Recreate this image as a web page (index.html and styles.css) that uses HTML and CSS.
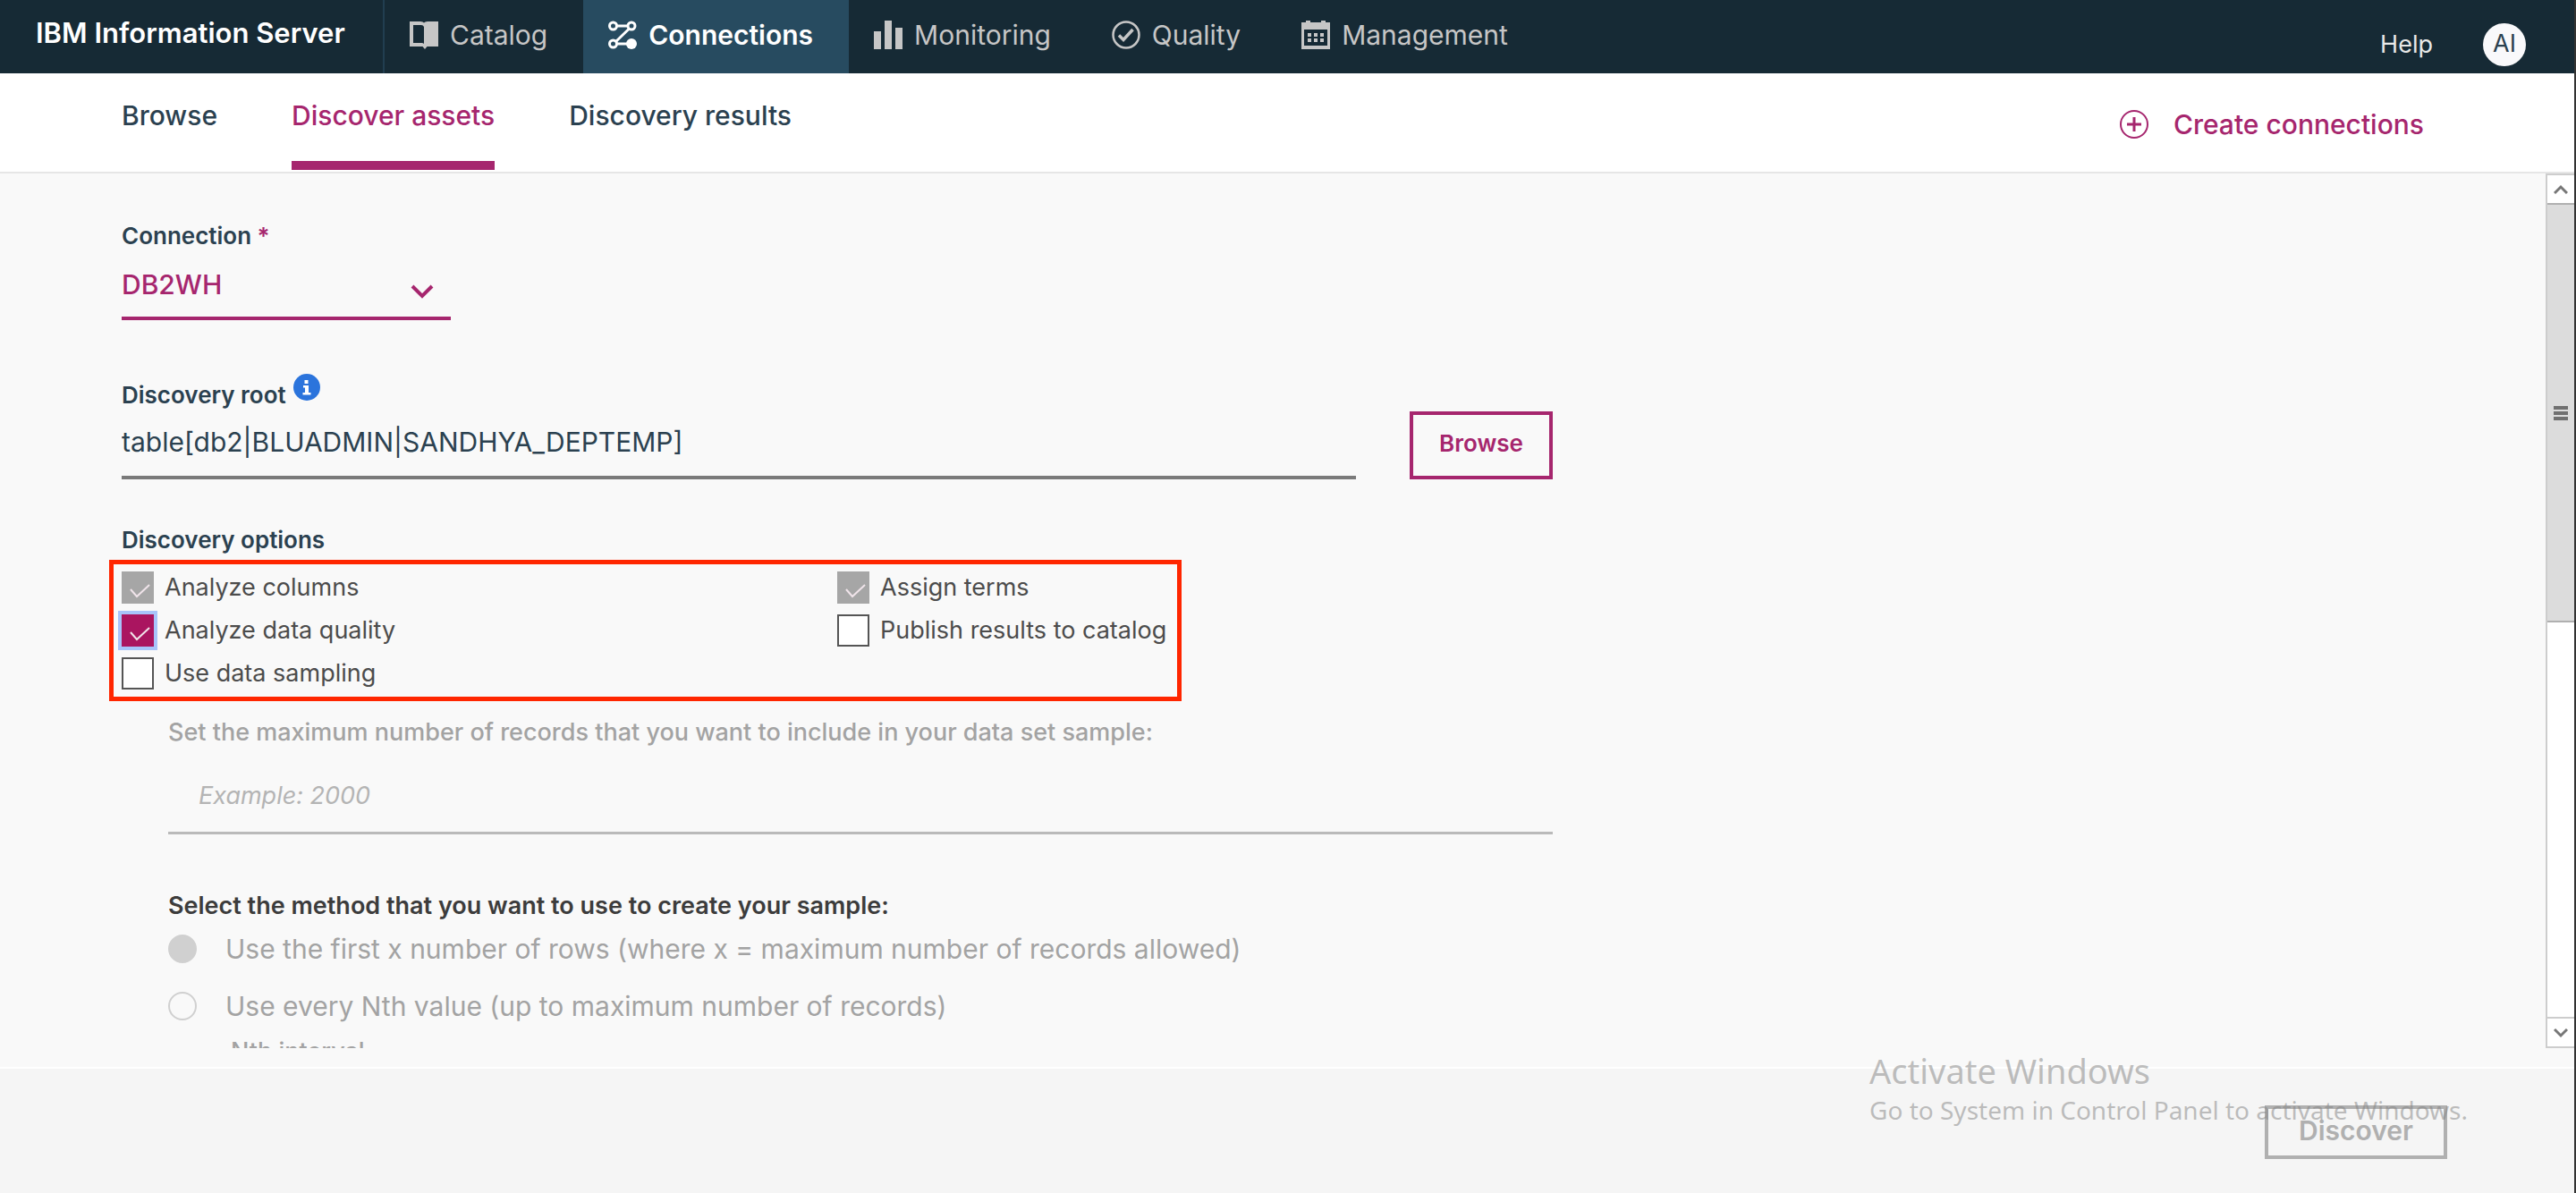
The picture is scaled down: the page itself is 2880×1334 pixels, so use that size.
FILE: index.html
```html
<!DOCTYPE html>
<html lang="en">
<head>
<meta charset="utf-8">
<meta name="viewport" content="width=device-width, initial-scale=1">
<title>IBM Information Server – Discover assets</title>
<link rel="stylesheet" href="styles.css">
</head>
<body>
<header class="topbar">
  <div class="brand">IBM Information Server</div>
  <nav class="mainnav" aria-label="Main">
    <a class="navitem" href="#catalog">
      <svg class="icon" viewBox="0 0 32 32" aria-hidden="true"><path fill="currentColor" fill-rule="evenodd" d="M0 1h12q3 0 4 1.500Q17 1 20 1h12v28H19.500L17 32l-2.500-3H0zM4 5v20h9.500q1.500 0 2.500 1V7q-1-2-3-2z"/></svg>
      Catalog</a>
    <a class="navitem navitem-active" href="#connections" aria-current="page">
      <svg class="icon" viewBox="0 0 32 32" aria-hidden="true"><g fill="none" stroke="currentColor" stroke-width="3"><circle cx="5.500" cy="6" r="4"/><circle cx="26" cy="6" r="4"/><circle cx="5.500" cy="26" r="4"/><path d="M9.500 6H22M23.500 9 8.500 23.500M9.500 26H22"/></g><circle cx="26" cy="26" r="6" fill="currentColor"/></svg>
      Connections</a>
    <a class="navitem" href="#monitoring">
      <svg class="icon" viewBox="0 0 32 32" aria-hidden="true"><path fill="currentColor" d="M0 12h8v20H0zM12 0h8v32h-8zM24 8h8v24h-8z"/></svg>
      Monitoring</a>
    <a class="navitem" href="#quality">
      <svg class="icon" viewBox="0 0 32 32" aria-hidden="true"><g fill="none" stroke="currentColor"><circle cx="16" cy="16" r="14.500" stroke-width="2.500"/><path stroke-width="3.500" d="m8 16.500 5 5L23.500 10"/></g></svg>
      Quality</a>
    <a class="navitem" href="#management">
      <svg class="icon" viewBox="0 0 32 32" aria-hidden="true"><path fill="currentColor" fill-rule="evenodd" d="M0 2h5V0h5v2h12V0h5v2h5v30H0zM3 10v18h26V10z"/><path fill="currentColor" d="M7 14h4v4H7zM14 14h4v4h-4zM21 14h4v4h-4zM7 20h4v4H7zM14 20h4v4h-4zM21 20h4v4h-4z"/></svg>
      Management</a>
  </nav>
  <div class="account">
    <a class="help" href="#help">Help</a>
    <button class="avatar" type="button" aria-label="Account AI">AI</button>
  </div>
</header>

<div class="subbar">
  <nav class="tabs" aria-label="Connections">
    <a class="tab" href="#browse">Browse</a>
    <a class="tab tab-active" href="#discover" aria-current="page">Discover assets</a>
    <a class="tab" href="#results">Discovery results</a>
  </nav>
  <button class="create" type="button">
    <svg class="icon" viewBox="0 0 32 32" aria-hidden="true"><g fill="none" stroke="currentColor"><circle cx="16" cy="16" r="15" stroke-width="2"/><path stroke-width="3" d="M16 8v16M8 16h16"/></g></svg>
    Create connections</button>
</div>

<div class="workspace">
  <main class="scroller">
    <form class="form">
      <div class="field">
        <label class="label" for="connection">Connection <span class="required">*</span></label>
        <div class="select-wrap">
          <select class="select" id="connection"><option>DB2WH</option></select>
          <svg class="chevron" viewBox="0 0 26 16" aria-hidden="true"><path fill="none" stroke="currentColor" stroke-width="4" d="m2 2 11 11L24 2"/></svg>
        </div>
      </div>

      <div class="root-row">
        <div class="field root-field">
          <div class="label-row">
            <label class="label" for="root">Discovery root</label>
            <svg class="info" viewBox="0 0 30 30" aria-hidden="true"><circle cx="15" cy="15" r="15" fill="#2b74dc"/><path fill="#fff" d="M12.500 7h4v4h-4zM11 13h6v8h2.500v2.500h-9V21H13v-5.500h-2z"/></svg>
          </div>
          <input class="input" id="root" type="text" value="table[db2|BLUADMIN|SANDHYA_DEPTEMP]">
        </div>
        <button class="button" type="button">Browse</button>
      </div>

      <fieldset class="options">
        <legend class="label">Discovery options</legend>
        <div class="option-grid">
          <label class="option"><input class="check" type="checkbox" checked disabled>Analyze columns</label>
          <label class="option"><input class="check" type="checkbox" checked disabled>Assign terms</label>
          <label class="option"><input class="check check-focus" type="checkbox" checked>Analyze data quality</label>
          <label class="option"><input class="check" type="checkbox">Publish results to catalog</label>
          <label class="option"><input class="check" type="checkbox">Use data sampling</label>
        </div>
      </fieldset>

      <div class="sampling">
        <label class="hint" for="records">Set the maximum number of records that you want to include in your data set sample:</label>
        <input class="records" id="records" type="text" placeholder="Example: 2000" disabled>
        <fieldset class="methods">
          <legend class="method-title">Select the method that you want to use to create your sample:</legend>
          <label class="method"><input class="radio" type="radio" name="method" checked disabled>Use the first x number of rows (where x = maximum number of records allowed)</label>
          <label class="method"><input class="radio" type="radio" name="method" disabled>Use every Nth value (up to maximum number of records)</label>
          <div class="interval">Nth interval</div>
        </fieldset>
      </div>
    </form>
  </main>
  <div class="scrollbar" aria-hidden="true">
    <div class="scroll-end"><svg class="arrow" viewBox="0 0 16 12"><path fill="none" stroke="currentColor" stroke-width="3" d="m1 10 7-7 7 7"/></svg></div>
    <div class="track"><div class="thumb"><span class="grip"></span></div></div>
    <div class="scroll-end"><svg class="arrow" viewBox="0 0 16 12"><path fill="none" stroke="currentColor" stroke-width="3" d="m1 2 7 7 7-7"/></svg></div>
  </div>
</div>

<footer class="footer">
  <button class="button button-disabled" type="button" disabled>Discover</button>
  <div class="watermark">
    <p class="watermark-title">Activate Windows</p>
    <p class="watermark-text">Go to System in Control Panel to activate Windows.</p>
  </div>
</footer>
</body>
</html>
```
FILE: styles.css
```css
:root {
  --navy: #162a35;
  --navy-active: #274b60;
  --magenta: #a6266e;
  --ink: #2b4150;
  --body-text: #4c4c4c;
  --muted: #a3a3a3;
  --page: #f9f9f9;
}

* { box-sizing: border-box; }

body {
  display: flex;
  flex-direction: column;
  height: 100vh;
  margin: 0;
  border-right: 2px solid #333;
  background: var(--page);
  color: var(--ink);
  font: 400 30px/36px Inter, "Liberation Sans", sans-serif;
}

a { color: inherit; text-decoration: none; }
button, input, select { margin: 0; font: inherit; color: inherit; }
button { background: none; border: 0; padding: 0; }
fieldset { margin: 0; padding: 0; border: 0; min-width: 0; }
legend { padding: 0; }
.icon { flex: none; width: 32px; height: 32px; }

/* Top bar */
.topbar {
  display: flex;
  flex: none;
  height: 82px;
  background: var(--navy);
  color: #c6c6c6;
}
.brand {
  display: flex;
  align-items: center;
  width: 430px;
  padding: 0 0 8px 40px;
  border-right: 2px solid #213e50;
  color: #fff;
  font-size: 31px;
  font-weight: 600;
  white-space: nowrap;
}
.mainnav { display: flex; }
.navitem {
  display: flex;
  align-items: center;
  gap: 13px;
  padding: 0 40px 4px 28px;
}
.navitem-active {
  background: var(--navy-active);
  color: #fff;
  font-weight: 600;
}
.account {
  display: flex;
  align-items: center;
  gap: 56px;
  margin-left: auto;
  padding: 18px 54px 0 0;
  color: #e8e8e8;
  font-size: 27px;
}
.avatar {
  width: 48px;
  height: 48px;
  padding-bottom: 3px;
  border-radius: 50%;
  background: #f9f9fb;
  color: var(--ink);
}

/* Tabs */
.subbar {
  display: flex;
  flex: none;
  justify-content: space-between;
  height: 112px;
  padding: 0 168px 0 136px;
  border-bottom: 2px solid #e6e6e6;
  background: #fff;
  font-weight: 500;
}
.tabs { display: flex; gap: 83px; }
.tab {
  height: 108px;
  border-bottom: 10px solid transparent;
  line-height: 94px;
}
.tab-active { border-color: var(--magenta); color: var(--magenta); }
.create {
  display: flex;
  align-items: center;
  gap: 28px;
  padding-top: 4px;
  color: var(--magenta);
}

/* Scrolling form */
.workspace { display: flex; flex: 1; min-height: 0; margin-bottom: 21px; }
.scroller { flex: 1; min-width: 0; overflow: hidden; padding: 52px 136px 0; }
.form { max-width: 1600px; }
.field { display: flex; flex-direction: column; gap: 16px; }
.label { font-size: 26px; font-weight: 600; }
.required { color: var(--magenta); }

.select-wrap { position: relative; width: 368px; }
.select {
  appearance: none;
  display: block;
  width: 100%;
  height: 60px;
  padding: 0 0 16px;
  border: 0;
  border-bottom: 4px solid var(--magenta);
  border-radius: 0;
  background: transparent;
  color: var(--magenta);
  font-weight: 500;
}
.chevron {
  position: absolute;
  top: 20px;
  right: 19px;
  width: 26px;
  height: 16px;
  color: var(--magenta);
  pointer-events: none;
}

.root-row { display: flex; align-items: flex-end; gap: 60px; margin-top: 66px; }
.root-field { flex: 1; }
.label-row { display: flex; gap: 8px; height: 36px; }
.info { width: 30px; height: 30px; margin-top: -6px; }
.input {
  width: 100%;
  height: 60px;
  padding: 0 0 20px;
  border: 0;
  border-bottom: 4px solid #7a7a7a;
  background: transparent;
}
.button {
  width: 160px;
  height: 76px;
  padding-bottom: 4px;
  border: 4px solid var(--magenta);
  color: var(--magenta);
  font-size: 26px;
  font-weight: 600;
}

.options { margin-top: 50px; }
.option-grid {
  display: grid;
  grid-template-columns: 800px 1fr;
  gap: 12px 0;
  max-width: 1199px;
  margin: 4px 0 0 -14px;
  padding: 8px 9px;
  border: 5px solid #ff2600;
}
.option {
  display: flex;
  align-items: center;
  gap: 12px;
  color: var(--body-text);
  font-size: 27px;
}
.check {
  appearance: none;
  flex: none;
  width: 36px;
  height: 36px;
  border: 2px solid #555;
  background: #fff;
}
.check:checked {
  border-color: #aa1560;
  background: #aa1560 url("data:image/svg+xml,%3Csvg xmlns='http://www.w3.org/2000/svg' viewBox='0 0 32 32'%3E%3Cpath d='m8 18 7 8L29 13' fill='none' stroke='%23f0e4ea' stroke-width='2'/%3E%3C/svg%3E") center / 32px 32px no-repeat;
}
.check:checked:disabled { border-color: #a6a6a6; background-color: #a6a6a6; }
.check-focus { box-shadow: 0 0 0 4px #a8c4fa; }

/* Sampling settings */
.sampling { margin: 17px 0 0 52px; color: var(--muted); }
.hint, .method-title { display: block; font-size: 27px; }
.hint { font-weight: 500; }
.records {
  display: block;
  width: 100%;
  height: 84px;
  margin-top: 12px;
  padding: 0 34px;
  border: 0;
  border-bottom: 3px solid #bababa;
  background: transparent;
  font-size: 27px;
  font-style: italic;
}
.records::placeholder { color: #b4b4b4; }
.methods { margin-top: 62px; }
.method-title { color: #3c3c3c; font-weight: 600; }
.method { display: flex; align-items: center; gap: 32px; margin: 12px 0 28px; }
.method + .method { margin: 0 0 15px; }
.radio {
  appearance: none;
  flex: none;
  width: 32px;
  height: 32px;
  border: 2px solid #d0d0d0;
  border-radius: 50%;
}
.radio:checked { background: #d0d0d0; }
.interval { padding-left: 70px; font-size: 27px; font-weight: 500; }

/* Scrollbar */
.scrollbar {
  display: flex;
  flex: none;
  flex-direction: column;
  width: 32px;
  border: 2px solid #cdcdcd;
  border-right: 0;
  background: #fff;
  color: #777;
}
.scroll-end { display: grid; flex: none; height: 31px; place-items: center; }
.arrow { width: 16px; height: 12px; }
.track { flex: 1; border-bottom: 2px solid #cdcdcd; }
.thumb {
  display: grid;
  height: 515px;
  height: calc(52% - 4px);
  place-items: center;
  border: 2px solid #b0b0b0;
  border-width: 2px 0;
  background: #dcdcdc;
}
.grip {
  width: 16px;
  height: 16px;
  background: repeating-linear-gradient(#707070 0 4px, #dcdcdc 4px 6px);
}

/* Footer */
.footer {
  position: relative;
  display: flex;
  flex: none;
  justify-content: flex-end;
  padding: 41px 142px 38px;
  border-top: 2px solid #fff;
  background: #f5f5f5;
}
.button-disabled {
  width: 204px;
  height: 60px;
  border-color: #b0b0b0;
  color: #b0b0b0;
  font-size: 30px;
}
.watermark {
  position: absolute;
  top: -20px;
  right: 119px;
  color: rgba(130, 130, 130, 0.5);
  font: 28px/44px "Noto Sans", sans-serif;
  pointer-events: none;
}
.watermark p { margin: 0; white-space: nowrap; }
.watermark .watermark-title { font-size: 38px; }
```
